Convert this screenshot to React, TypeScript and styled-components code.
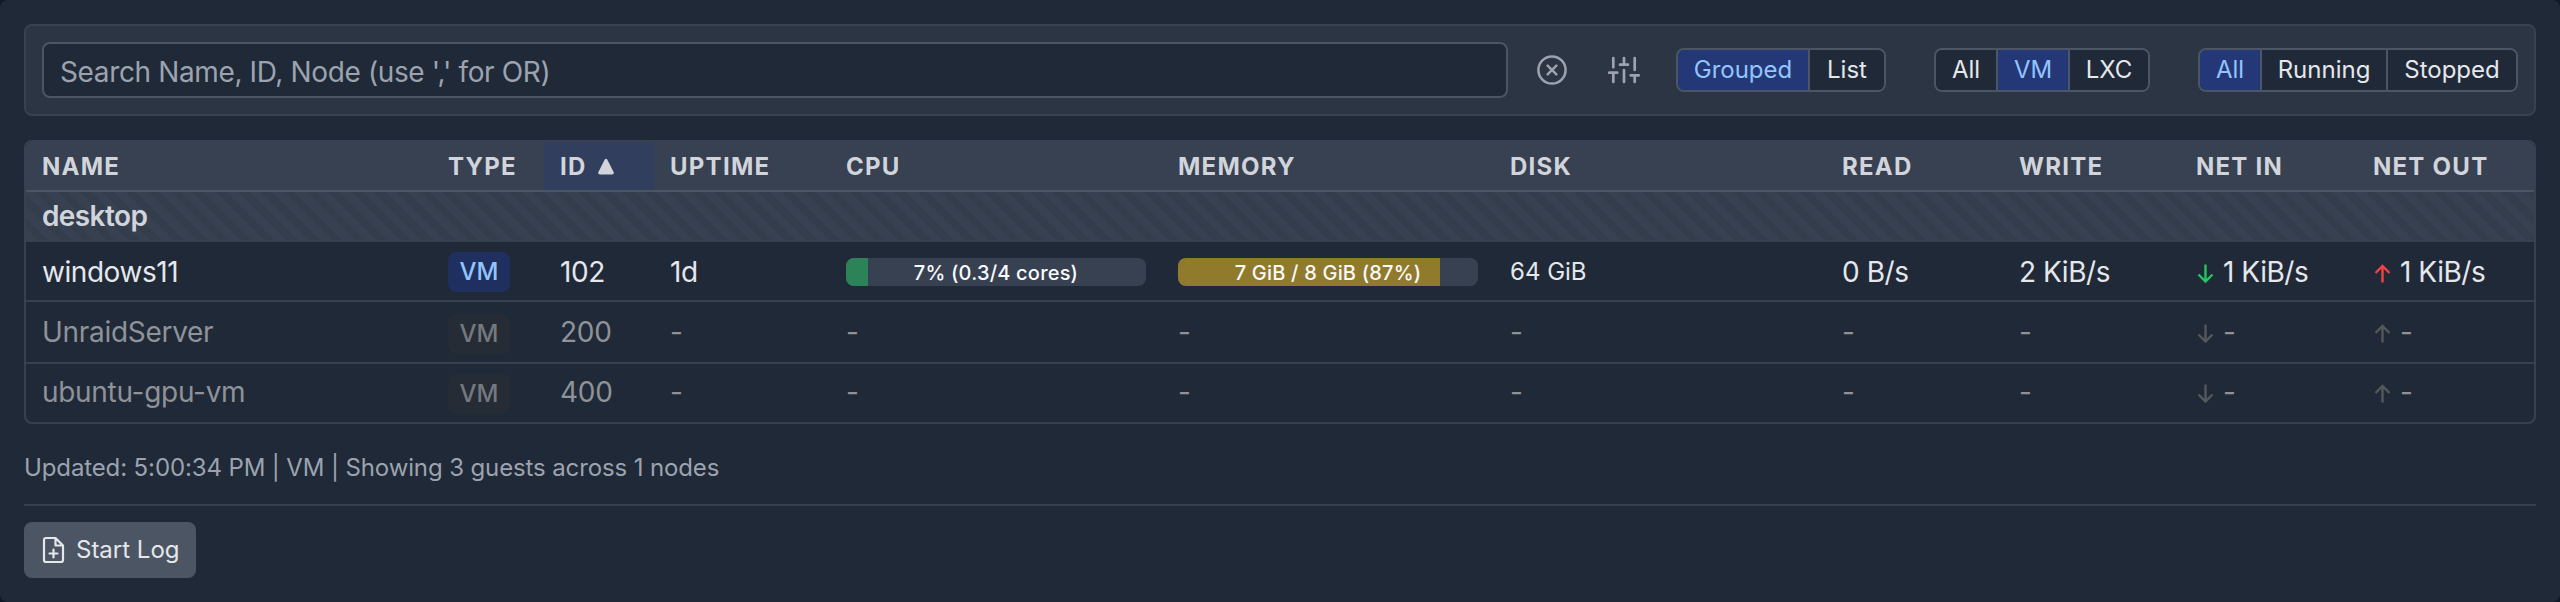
import React from "react";
import styled, { createGlobalStyle, css } from "styled-components";

const GlobalStyle = createGlobalStyle`
  * { box-sizing: border-box; }
  body { margin: 0; background: #111827; }
`;

const Card = styled.main`
  width: 2560px;
  height: 602px;
  padding: 24px;
  border-radius: 8px;
  background: #1f2937;
  color: #e5e7eb;
  font-family: Inter, "Liberation Sans", sans-serif;
  font-size: 28px;
  line-height: 40px;
`;

const FilterBar = styled.section`
  display: flex;
  align-items: center;
  height: 92px;
  padding: 0 16px;
  border: 2px solid #374151;
  border-radius: 8px;
  background: #2b3544;
`;

const SearchInput = styled.input`
  width: 1466px;
  height: 56px;
  margin: 0;
  padding: 4px 16px 0;
  border: 2px solid #4b5563;
  border-radius: 8px;
  background: #1f2937;
  font: inherit;
  letter-spacing: -0.37px;
  outline: none;
  &::placeholder { color: #9ca3af; opacity: 1; }
`;

const IconButton = styled.button<{ $left: number }>`
  display: flex;
  margin: 0 0 0 ${(p) => p.$left}px;
  padding: 0;
  border: 0;
  background: none;
  color: #9ca3af;
`;

const Segmented = styled.div<{ $left: number }>`
  display: flex;
  height: 44px;
  margin-left: ${(p) => p.$left}px;
  border: 2px solid #4b5563;
  border-radius: 8px;
  overflow: hidden;
`;

const Segment = styled.button<{ $width: number; $active?: boolean }>`
  width: ${(p) => p.$width}px;
  margin: 0;
  padding: 0 0 1px;
  border: 0;
  background: ${(p) => (p.$active ? "#243878" : "#1f2937")};
  color: ${(p) => (p.$active ? "#93c5fd" : "#e5e7eb")};
  font: 24px/36px Inter, sans-serif;
  & + & { border-left: 2px solid #4b5563; }
`;

const Table = styled.div`
  margin-top: 24px;
  border: 2px solid #374151;
  border-radius: 8px;
  overflow: hidden;
`;

const columns = css`
  display: grid;
  grid-template-columns: 406px 112px 110px 176px 332px 332px 332px repeat(4, 177px);
`;

const HeadRow = styled.div`
  ${columns}
  height: 50px;
  border-bottom: 2px solid #4b5563;
  background: #374151;
`;

const HeadCell = styled.div<{ $sorted?: boolean }>`
  display: flex;
  align-items: center;
  gap: 10px;
  padding: 1px 0 0 16px;
  background: ${(p) => (p.$sorted ? "#323e5d" : "transparent")};
  color: #d1d5db;
  font-size: 24px;
  font-weight: 700;
  letter-spacing: 1.25px;
`;

const GroupRow = styled.div`
  height: 50px;
  padding: 4px 16px;
  border-bottom: 2px solid #374151;
  background: #374151 repeating-linear-gradient(45deg, transparent 0 8px, #343d4b 8px 16px);
  color: #d1d5db;
  font-weight: 600;
  letter-spacing: -0.6px;
`;

const Row = styled.div<{ $height: number; $top: number; $stopped?: boolean }>`
  ${columns}
  align-items: start;
  height: ${(p) => p.$height}px;
  padding-top: ${(p) => p.$top}px;
  & + & { border-top: 2px solid #374151; }
  color: ${(p) => (p.$stopped ? "#8f9297" : "#e5e7eb")};
  letter-spacing: ${(p) => (p.$stopped ? -0.3 : -0.45)}px;
`;

const Cell = styled.div<{ $small?: boolean }>`
  display: flex;
  align-items: center;
  height: 42px;
  padding-left: 16px;
  white-space: pre;
  font-size: ${(p) => (p.$small ? 24 : 28)}px;
  ${(p) => p.$small && "letter-spacing: 0;"}
`;

const Badge = styled.span<{ $stopped?: boolean }>`
  width: 62px;
  height: 40px;
  margin-top: ${(p) => (p.$stopped ? 4 : 0)}px;
  border-radius: 8px;
  background: ${(p) => (p.$stopped ? "#262c35" : "#1f3060")};
  color: ${(p) => (p.$stopped ? "#75787e" : "#93c5fd")};
  font-size: 24px;
  font-weight: 500;
  letter-spacing: 0;
  line-height: 39px;
  text-align: center;
`;

const Meter = styled.div`
  display: grid;
  width: 300px;
  height: 28px;
  border-radius: 8px;
  background: #374151;
  overflow: hidden;
  & > * { grid-area: 1 / 1; }
`;

const MeterFill = styled.div<{ $color: string }>`
  background: ${(p) => p.$color};
`;

const MeterLabel = styled.span`
  z-index: 1;
  color: #f9fafb;
  font-size: 20px;
  font-weight: 500;
  letter-spacing: 0.2px;
  line-height: 30px;
  text-align: center;
`;

const Arrow = styled.svg<{ $color: string }>`
  width: 20px;
  height: 20px;
  margin: 4px 7px 0 0;
  color: ${(p) => p.$color};
`;

const Status = styled.p`
  margin: 24px 0 0;
  color: #9ca3af;
  font-size: 24px;
  letter-spacing: -0.12px;
`;

const Footer = styled.footer`
  margin-top: 16px;
  padding-top: 16px;
  border-top: 2px solid #374151;
`;

const LogButton = styled.button`
  display: flex;
  align-items: center;
  gap: 9px;
  width: 172px;
  height: 56px;
  margin: 0;
  padding: 0 0 0 17px;
  border: 0;
  border-radius: 8px;
  background: #4b5563;
  color: #e5e7eb;
  font: 24px/32px Inter, sans-serif;
  white-space: nowrap;
`;

const FlowArrow = ({ up, color }: { up?: boolean; color: string }) => (
  <Arrow $color={color} viewBox="0 0 20 20" fill="none" stroke="currentColor" strokeWidth="2.4">
    <path d={up ? "M9.5 18.5V2M2.5 9l7-7 7 7" : "M9.5 .5v17M2.5 10.5l7 7 7-7"} />
  </Arrow>
);

const Usage = ({ percent, color, label }: { percent: number; color: string; label: string }) => (
  <Meter>
    <MeterFill $color={color} style={{ width: `${percent}%` }} />
    <MeterLabel>{label}</MeterLabel>
  </Meter>
);

const Options = ({ left, items, active }: { left: number; items: [string, number][]; active: string }) => (
  <Segmented $left={left}>
    {items.map(([name, width]) => (
      <Segment key={name} $width={width} $active={name === active}>{name}</Segment>
    ))}
  </Segmented>
);

const headings = ["NAME", "TYPE", "ID", "UPTIME", "CPU", "MEMORY", "DISK", "READ", "WRITE", "NET IN", "NET OUT"];

const StoppedRow = ({ name, id, height, top }: { name: string; id: string; height: number; top: number }) => (
  <Row $stopped $height={height} $top={top}>
    <Cell>{name}</Cell>
    <Cell><Badge $stopped>VM</Badge></Cell>
    <Cell>{id}</Cell>
    {[0, 1, 2, 3, 4, 5].map((n) => <Cell key={n}>-</Cell>)}
    <Cell><FlowArrow color="#54575c" />-</Cell>
    <Cell><FlowArrow up color="#54575c" />-</Cell>
  </Row>
);

export default function App() {
  return (
    <>
      <GlobalStyle />
      <Card>
        <FilterBar>
          <SearchInput placeholder="Search Name, ID, Node (use ',' for OR)" />
          <IconButton $left={28} aria-label="Clear">
            <svg width="32" height="32" viewBox="0 0 32 32" fill="none" stroke="currentColor" strokeWidth="2.5" strokeLinecap="round">
              <circle cx="16" cy="16" r="13.6" />
              <path d="M11.6 11.6l8.8 8.8M20.4 11.6l-8.8 8.8" />
            </svg>
          </IconButton>
          <IconButton $left={40} aria-label="Columns">
            <svg width="32" height="32" viewBox="0 0 32 32" fill="none" stroke="currentColor" strokeWidth="2.7" strokeLinecap="round">
              <path d="M5.3 28v-9.3M5.3 13.3V4M16 28V16M16 10.7V4M26.7 28v-6.7M26.7 16V4M1.3 18.7h8M12 10.7h8M22.7 21.3h8" />
            </svg>
          </IconButton>
          <Options left={36} active="Grouped" items={[["Grouped", 130], ["List", 76]]} />
          <Options left={48} active="VM" items={[["All", 60], ["VM", 72], ["LXC", 80]]} />
          <Options left={48} active="All" items={[["All", 60], ["Running", 126], ["Stopped", 130]]} />
        </FilterBar>

        <Table>
          <HeadRow>
            {headings.map((h) => (
              <HeadCell key={h} $sorted={h === "ID"}>
                {h}
                {h === "ID" && (
                  <svg width="18" height="18" viewBox="0 0 18 18" fill="currentColor">
                    <path d="M7.6 1.8Q9 -.2 10.4 1.8L16.6 14Q17.4 16.4 15 16.4H3Q.6 16.4 1.4 14Z" />
                  </svg>
                )}
              </HeadCell>
            ))}
          </HeadRow>
          <GroupRow>desktop</GroupRow>
          <Row $height={58} $top={9}>
            <Cell>windows11</Cell>
            <Cell><Badge>VM</Badge></Cell>
            <Cell>102</Cell>
            <Cell>1d</Cell>
            <Cell><Usage percent={7.3} color="#2c8357" label="7% (0.3/4 cores)" /></Cell>
            <Cell><Usage percent={87.3} color="#907a2c" label="7 GiB / 8 GiB (87%)" /></Cell>
            <Cell $small>64 GiB</Cell>
            <Cell>0 B/s</Cell>
            <Cell>2 KiB/s</Cell>
            <Cell><FlowArrow color="#22c55e" />1 KiB/s</Cell>
            <Cell><FlowArrow up color="#ef4444" />1 KiB/s</Cell>
          </Row>
          <StoppedRow name="UnraidServer" id="200" height={62} top={9} />
          <StoppedRow name="ubuntu-gpu-vm" id="400" height={60} top={7} />
        </Table>

        <Status>Updated: 5:00:34 PM | VM | Showing 3 guests across 1 nodes</Status>
        <Footer>
          <LogButton>
            <svg width="26" height="30" viewBox="0 0 26 30" fill="none" stroke="currentColor" strokeWidth="2.2" strokeLinejoin="round" strokeLinecap="round">
              <path d="M14.5 3H5a2 2 0 0 0-2 2v20a2 2 0 0 0 2 2h15a2 2 0 0 0 2-2V10.5ZM14.5 3v7.5H22M12.5 14.5v8M8.5 18.5h8" />
            </svg>
            Start Log
          </LogButton>
        </Footer>
      </Card>
    </>
  );
}
